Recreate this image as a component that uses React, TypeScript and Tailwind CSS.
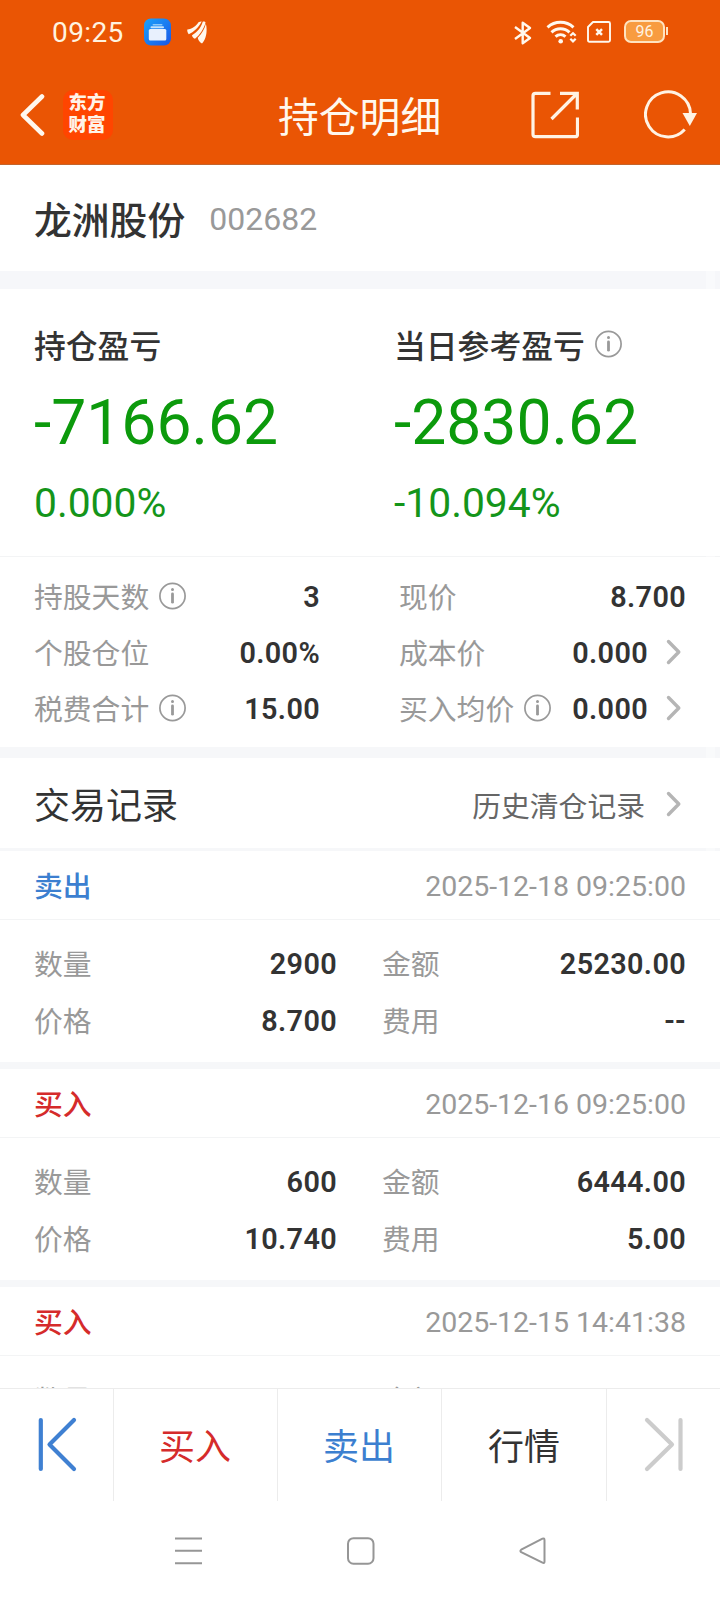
import { FC, ReactNode } from 'react'
import clsx from 'clsx'

interface ITradeRecord {
  side: 'buy' | 'sell'
  time: string
  fields: [string, string][]
}

const records: ITradeRecord[] = [
  {
    side: 'sell',
    time: '2025-12-18 09:25:00',
    fields: [
      ['数量', '2900'],
      ['金额', '25230.00'],
      ['价格', '8.700'],
      ['费用', '--'],
    ],
  },
  {
    side: 'buy',
    time: '2025-12-16 09:25:00',
    fields: [
      ['数量', '600'],
      ['金额', '6444.00'],
      ['价格', '10.740'],
      ['费用', '5.00'],
    ],
  },
  {
    side: 'buy',
    time: '2025-12-15 14:41:38',
    fields: [
      ['数量', ''],
      ['金额', ''],
    ],
  },
]

const InfoIcon: FC = () => (
  <svg width="28" height="28" viewBox="0 0 28 28" fill="none" className="mb-[3px] shrink-0">
    <circle cx="14.5" cy="14" r="12.6" stroke="#999" strokeWidth="1.7" />
    <circle cx="14.5" cy="7.6" r="1.5" fill="#999" />
    <path d="M14.5 12V20.2" stroke="#999" strokeWidth="2.8" strokeLinecap="round" />
  </svg>
)

const ArrowIcon: FC = () => (
  <svg width="16" height="26" viewBox="0 0 16 26" fill="none" className="mb-[3px] shrink-0">
    <path
      d="M2.5 2.5L12.8 13L2.5 23.5"
      stroke="#b5b5b5"
      strokeWidth="3.4"
      strokeLinecap="round"
      strokeLinejoin="round"
    />
  </svg>
)

const StatusBar: FC = () => (
  <div className="flex h-[62px] items-center pl-[52px] text-[28px] text-[#fff3e0]">
    <span className="w-[92px] leading-[62px] tracking-[0.4px] pt-[3px]">09:25</span>
    <svg width="28" height="28" viewBox="0 0 28 28" className="mt-[2px]">
      <defs>
        <linearGradient id="app" x1="0" y1="0" x2="1" y2="1">
          <stop offset="0" stopColor="#1ba2fb" />
          <stop offset="1" stopColor="#1a56e6" />
        </linearGradient>
      </defs>
      <rect x="0" y="0.5" width="27" height="27" rx="7" fill="url(#app)" />
      <rect x="8.5" y="6" width="10" height="1.6" rx="0.8" fill="#8ccaf9" />
      <rect x="6.5" y="8.3" width="13.5" height="2" rx="1" fill="#c3e2fb" />
      <rect x="4.8" y="11" width="17.5" height="11.5" rx="1.5" fill="#e8f0fd" />
    </svg>
    <svg width="20" height="23" viewBox="0 0 20 23" fill="#fff8ee" className="ml-[15px] mt-[2px]">
      <path d="M0.3 8.6C5 8 9.5 5 11.5 1.3C12.5 0.9 14 0.4 14.7 0.6C12 6 6.5 11.5 1.8 13.2C0.7 12.2 0 10 0.3 8.6Z" />
      <path d="M5 14.2C10 11.5 14 7 15.7 0.8C17 0.3 18.2 0.9 18.5 1.6C17 8 12.5 14.5 8 17.8C6.3 17 5 15.5 5 14.2Z" />
      <path d="M10.8 16.8C15 12.5 17.6 8 18.9 2.8C20.6 9.5 19.3 18.3 15 22.6C12.8 21.3 11 19 10.8 16.8Z" />
    </svg>

    <svg width="18" height="24" viewBox="0 0 18 24" fill="none" stroke="#fff8ee" strokeWidth="2.4" strokeLinejoin="round" className="ml-auto mt-[3px]">
      <path d="M1 6L16 17L8.7 22.3V1.7L16 7L1 18" />
    </svg>
    <svg width="32" height="24" viewBox="0 0 32 24" fill="none" stroke="#fff8ee" strokeWidth="3" className="ml-[14px] mt-px">
      <path d="M1.5 7.3C9 0.7 20 0.7 27.5 7.3" />
      <path d="M5.5 12.3C10.5 7.5 18.5 7.5 23.5 12.3" />
      <path d="M9.5 16.6C12.5 14 16.5 14 19.5 16.6" />
      <circle cx="14.7" cy="21.2" r="2.3" fill="#fff8ee" stroke="none" />
      <path d="M24.3 15.8L27 13.2L29.7 15.8M24.3 18.8L27 21.4L29.7 18.8" strokeWidth="2.2" />
    </svg>
    <svg width="24" height="22" viewBox="0 0 24 22" fill="none" stroke="#fff8ee" strokeWidth="1.9" className="ml-[9px] mt-[1px]">
      <path d="M6 1H21.5Q23 1 23 2.5V19.2Q23 20.7 21.5 20.7H2.5Q1 20.7 1 19.2V6Z" strokeLinejoin="round" />
      <path d="M9.3 8.2L15 13.9M15 8.2L9.3 13.9" strokeWidth="2.5" />
    </svg>
    <div className="ml-[13px] mt-[1px] flex h-[23px] w-[41px] items-center justify-center rounded-[7px] border-2 border-[#ffe3c0] bg-[#f89c40] text-[16px] leading-none">
      96
    </div>
    <div className="ml-px mr-[52px] h-2 w-[2px] bg-[#ffe3c0]" />
  </div>
)

const TitleBar: FC = () => (
  <div className="flex h-[103px] items-center border-b border-[#c4642c] pl-[20px] pr-[22px] pt-[3px]">
    <div className="flex w-[258px] items-center">
      <svg width="25" height="42" viewBox="0 0 25 42" fill="none" stroke="#fff8ee" strokeWidth="4.6" strokeLinecap="round" strokeLinejoin="round">
        <path d="M22 2.5L3 21L22 39.5" />
      </svg>
      <div className="ml-[18px] flex h-[50px] w-[50px] flex-col items-center justify-center rounded-[10px] bg-[#ff4500] pb-[2px] pr-[2px] text-[18.5px] font-black leading-[22px] text-[#fff3e8]">
        <span>东方</span>
        <span>财富</span>
      </div>
    </div>
    <h1 className="pt-[6px] text-[40.8px] leading-[60px] text-[#fff8ee]">持仓明细</h1>
    <svg width="48" height="48" viewBox="0 0 48 48" fill="none" stroke="#fff3e4" strokeWidth="3.2" className="ml-auto">
      <path d="M19.5 2.3H4.5Q2 2.3 2 4.8V43.2Q2 45.7 4.5 45.7H44Q46.5 45.7 46.5 43.2V26.5" />
      <path d="M29 2.3H46.3V18.5M45 3.5L20.5 28" />
    </svg>
    <svg width="54" height="50" viewBox="0 0 54 50" fill="none" className="ml-[65px]">
      <path d="M46.5 23.5A22.5 22.5 0 1 0 40.7 39.5" stroke="#fff3e4" strokeWidth="3" />
      <path d="M38.5 23H53L45.8 36Z" fill="#fff3e4" />
    </svg>
  </div>
)

interface IProfitProps {
  title: string
  value: string
  percent: string
  info?: boolean
}

const Profit: FC<IProfitProps> = ({ title, value, percent, info }) => (
  <div className="flex w-[360px] shrink-0 flex-col pt-[32px]">
    <div className="flex h-[48px] items-center gap-[9px] text-[31.8px] font-medium text-[#333]">
      <span className="pt-[5px]">{title}</span>
      {info && <InfoIcon />}
    </div>
    <div className="mt-[14px] h-[80px] text-[62.4px] leading-[80px] text-[#0c9a0c]">{value}</div>
    <div className="mt-[10px] text-[40.8px] leading-[60px] text-[#14951a]">{percent}</div>
  </div>
)

const Label: FC<{ children: ReactNode }> = ({ children }) => (
  <span className="pt-[3px] text-[#999]">{children}</span>
)

const Value: FC<{ children: ReactNode }> = ({ children }) => (
  <span className="ml-auto font-semibold tracking-[0.35px] text-[#333]">{children}</span>
)

interface IMetricProps {
  label: string
  value: string
  info?: boolean
  arrow?: boolean
}

const Metric: FC<IMetricProps> = ({ label, value, info, arrow }) => (
  <div className="flex h-14 items-center gap-[9px] pt-px">
    <Label>{label}</Label>
    {info && <InfoIcon />}
    <Value>{value}</Value>
    {arrow && (
      <div className="ml-[9px] mr-1">
        <ArrowIcon />
      </div>
    )}
  </div>
)

const Field: FC<{ label: string; value: string }> = ({ label, value }) => (
  <div className="flex h-[57px] items-center">
    <Label>{label}</Label>
    <Value>{value}</Value>
  </div>
)

const Record: FC<{ record: ITradeRecord }> = ({ record }) => (
  <div className="h-[218px] shrink-0 border-b-[7px] border-[#f6f7f9]">
    <div className="flex h-[69px] items-center justify-between border-b border-[#f3f4f5] px-[34px] pt-[3px]">
      <span
        className={clsx(
          'pt-[3px] font-medium',
          record.side === 'buy' ? 'text-[#d52b2b]' : 'text-[#3c7fd0]'
        )}
      >
        {record.side === 'buy' ? '买入' : '卖出'}
      </span>
      <span className="pt-[2px] text-[28.5px] text-[#999]">{record.time}</span>
    </div>
    <div className="grid grid-cols-[303px_304px] gap-x-[45px] pl-[34px] pt-4">
      {record.fields.map(([label, value]) => (
        <Field key={label} label={label} value={value} />
      ))}
    </div>
  </div>
)

const BottomBar: FC = () => (
  <div className="flex h-[113px] shrink-0 border-t border-[#ececec] text-[36px]">
    <div className="flex w-[114px] items-center justify-center border-r border-[#ececec] pb-px">
      <svg width="40" height="56" viewBox="0 0 40 56" fill="none" stroke="#3f80d2" strokeWidth="4.2" strokeLinecap="round" strokeLinejoin="round">
        <path d="M3.8 3V52M37 3L12.5 27.5L37 52" />
      </svg>
    </div>
    <div className="flex w-[164px] items-center justify-center border-r border-[#ececec] pt-[6px] pr-px text-[#d52b2b]">
      买入
    </div>
    <div className="flex w-[164px] items-center justify-center border-r border-[#ececec] pr-px pt-[6px] text-[#3c7fd0]">
      卖出
    </div>
    <div className="flex w-[165px] items-center justify-center border-r border-[#ececec] pt-[6px] text-[#333]">
      行情
    </div>
    <div className="flex flex-1 items-center justify-center pb-px">
      <svg width="40" height="56" viewBox="0 0 40 56" fill="none" stroke="#ccc" strokeWidth="4.2" strokeLinecap="round" strokeLinejoin="round">
        <path d="M3 3L28 27.5L3 52M36.5 3V52" />
      </svg>
    </div>
  </div>
)

const SystemNav: FC = () => (
  <div className="flex h-[99px] shrink-0 items-center justify-between pl-[174px] pr-[173px]">
    <svg width="28" height="28" viewBox="0 0 28 28" stroke="#969696" strokeWidth="2">
      <path d="M1 1.5H28M1 13.8H28M1 26.2H28" />
    </svg>
    <svg width="28" height="28" viewBox="0 0 28 28" fill="none" stroke="#969696" strokeWidth="2">
      <rect x="1" y="1.2" width="25.5" height="25.5" rx="5.5" />
    </svg>
    <svg width="28" height="28" viewBox="0 0 28 28" fill="none" stroke="#969696" strokeWidth="2" strokeLinejoin="round">
      <path d="M2.2 12.7L23.5 1.6Q25.5 0.9 25.5 3.2V24.5Q25.5 26.7 23.5 25.7L2.2 15.2Q0.6 13.9 2.2 12.7Z" />
    </svg>
  </div>
)

export default function App() {
  return (
    <div className="flex h-[1600px] w-[720px] flex-col overflow-hidden bg-white font-['Roboto','Noto_Sans_CJK_SC',sans-serif] text-[28.8px]">
      <header className="h-[165px] shrink-0 bg-[#ea5504]">
        <StatusBar />
        <TitleBar />
      </header>

      <main className="relative flex min-h-0 flex-1 flex-col overflow-hidden">
        <div className="flex h-[124px] shrink-0 items-center border-b-[18px] border-[#f6f7fa] pl-[34px]">
          <span className="pt-[6px] text-[37.8px] font-medium text-[#333]">龙洲股份</span>
          <span className="ml-[24px] pt-px text-[32px] text-[#999]">002682</span>
        </div>

        <div className="flex h-[268px] shrink-0 border-b border-[#f3f4f5] pl-[34px]">
          <Profit title="持仓盈亏" value="-7166.62" percent="0.000%" />
          <Profit title="当日参考盈亏" value="-2830.62" percent="-10.094%" info />
        </div>

        <div className="grid h-[201px] shrink-0 grid-cols-[286px_287px] content-start gap-x-[79px] border-b-[11px] border-[#f6f7f9] pl-[34px] pt-3">
          <Metric label="持股天数" value="3" info />
          <Metric label="现价" value="8.700" />
          <Metric label="个股仓位" value="0.00%" />
          <Metric label="成本价" value="0.000" arrow />
          <Metric label="税费合计" value="15.00" info />
          <Metric label="买入均价" value="0.000" info arrow />
        </div>

        <div className="flex h-[93px] shrink-0 items-center border-b-[3px] border-[#f6f7f9] pl-[34px] pr-[38px] pt-[4px]">
          <span className="pt-[3px] text-[36px] text-[#333]">交易记录</span>
          <span className="ml-auto mr-[21px] pt-[5px] text-[#666]">历史清仓记录</span>
          <ArrowIcon />
        </div>

        {records.map((record) => (
          <Record key={record.time} record={record} />
        ))}

        {/* scrollbar thumb */}
        <div className="absolute right-[5px] top-0 h-[690px] w-[9px] bg-white/40" />
      </main>

      <BottomBar />
      <SystemNav />
    </div>
  )
}
